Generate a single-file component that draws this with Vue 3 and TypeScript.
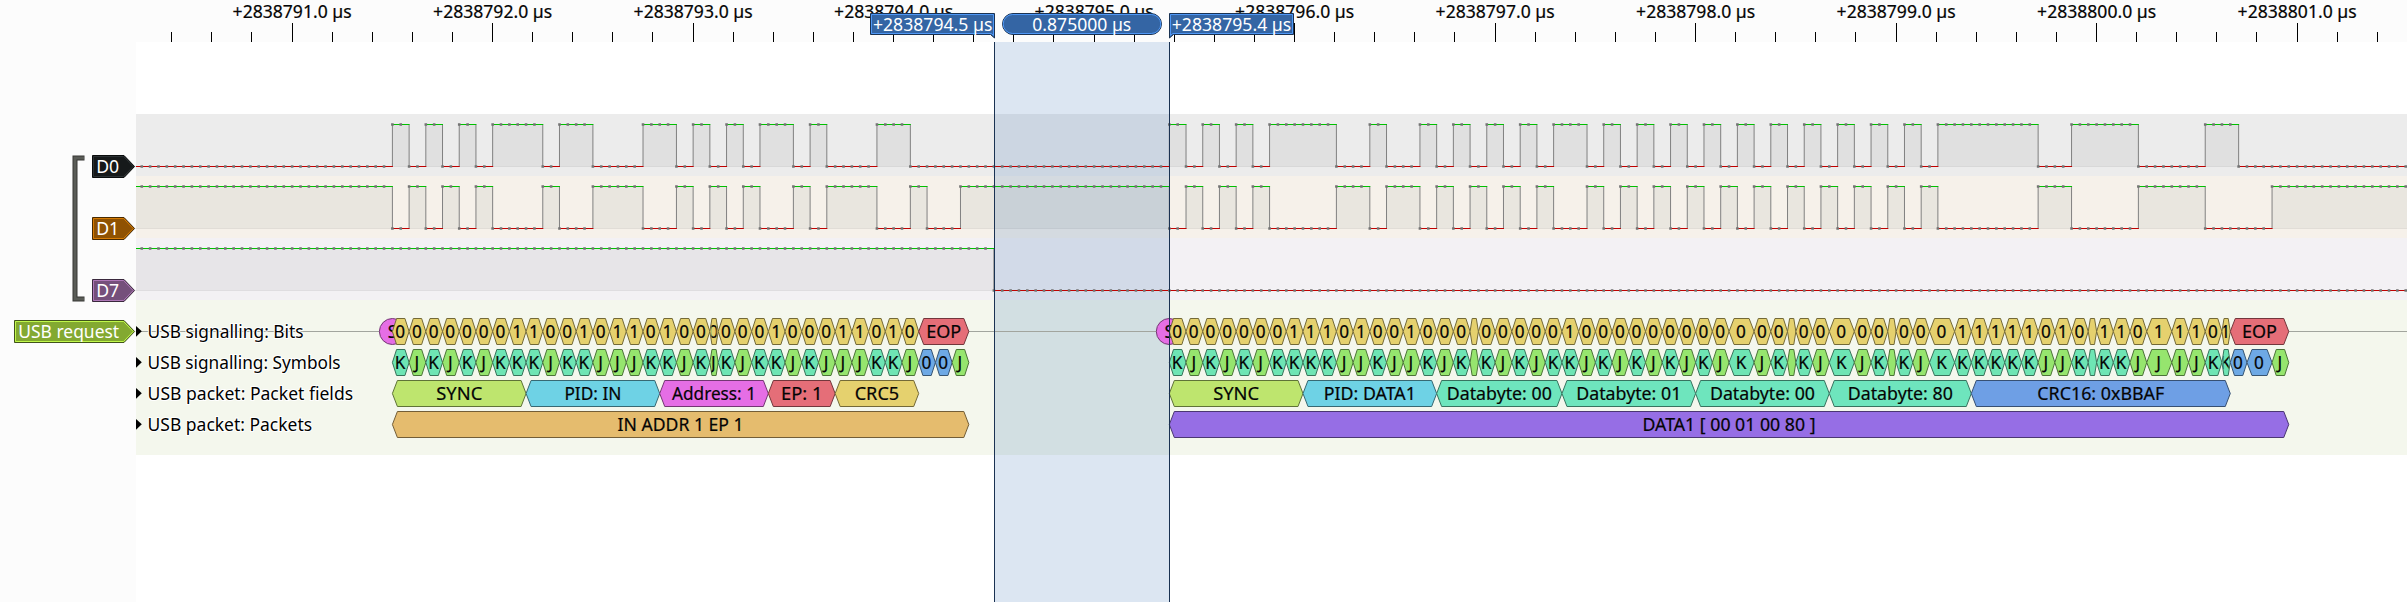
<script setup lang="ts">
type Kind = 'bit' | 'eop' | 'k' | 'j' | 'se0' | 'sync' | 'pid' | 'addr' | 'ep' | 'crc5' | 'data' | 'crc16' | 'in' | 'data1'

interface Annotation {
  from: number
  to: number
  text: string
  kind: Kind
  width?: number
}

interface Channel {
  name: string
  color: string
  shade: string
  highShade: string
  outline: string
  highlight: string
  top: number
  startHigh: boolean
  edges: number[]
}

const LEFT = 136
const RIGHT = 2407
const ORIGIN = 392.4
const STEP = 8.354

const sx = (n: number): number => ORIGIN + n * STEP

/* ---- time ruler ---- */
const ticks = Array.from({ length: 56 }, (_, i) => {
  const x = Math.floor(292.05 + (i - 3) * 40.1) + 0.5
  return { x, major: (i - 3) % 5 === 0 }
})
const majors = Array.from({ length: 11 }, (_, i) => ({
  x: 292.1 + i * 200.5,
  text: `+${2838791 + i}.0 µs`,
}))

/* ---- logic channels ---- */
const pairEdges = [
  0, 2, 4, 6, 8, 10, 12, 18, 20, 24, 30, 34, 36, 38, 40, 42, 44, 48, 50, 52, 58, 62,
]
const dataEdges = [
  93, 95, 97, 99, 101, 103, 105, 113, 117, 119, 123, 125, 127, 129, 131, 133, 135, 137, 139, 143,
  145, 147, 149, 151, 153, 155, 157, 159, 161, 163, 165, 167, 169, 171, 173, 175, 177, 179, 181,
  183, 185, 197, 201, 209, 217,
]

const channels: Channel[] = [
  {
    name: 'D0', color: '#16191a', shade: '#ececec', highShade: '#e0e0e0', outline: '#0a0c0c', highlight: '#2b3133',
    top: 114, startHigh: false, edges: [...pairEdges, ...dataEdges, 221],
  },
  {
    name: 'D1', color: '#8f5202', shade: '#f6f1ea', highShade: '#e9e6df', outline: '#472900', highlight: '#d67b03',
    top: 176, startHigh: true, edges: [...pairEdges, 64, 68, ...dataEdges, 225],
  },
  {
    name: 'D7', color: '#75507b', shade: '#f3f1f4', highShade: '#e7e5e8', outline: '#3a283d', highlight: '#af78b8',
    top: 238, startHigh: true, edges: [72],
  },
]

interface Run { x1: number; x2: number; high: boolean }

function runs(ch: Channel): Run[] {
  const xs = [LEFT, ...ch.edges.map(sx), RIGHT]
  return xs.slice(1).map((x2, i) => ({
    x1: xs[i],
    x2,
    high: i % 2 === 0 ? ch.startHigh : !ch.startHigh,
  }))
}

function levelAt(ch: Channel, n: number): boolean {
  const passed = ch.edges.filter((e) => e <= n).length
  return passed % 2 === 0 ? ch.startHigh : !ch.startHigh
}

const samples = Array.from({ length: 272 }, (_, i) => i - 30)

function dots(ch: Channel): string {
  return samples
    .map((n) => `M${(sx(n) - 1.3).toFixed(2)} ${ch.top + (levelAt(ch, n) ? 10.5 : 52.5)}h2.6`)
    .join('')
}

const traces = channels.map((ch) => {
  const r = runs(ch)
  return {
    ...ch,
    highs: r.filter((s) => s.high),
    green: r.filter((s) => s.high).map((s) => `M${s.x1} ${ch.top + 10.5}H${s.x2 + 0.5}`).join(''),
    red: r.filter((s) => !s.high).map((s) => `M${s.x1} ${ch.top + 52.5}H${s.x2 + 0.5}`).join(''),
    steps: ch.edges.map((e) => `M${sx(e).toFixed(2)} ${ch.top + 10.5}v42`).join(''),
    dots: dots(ch),
  }
})

/* ---- protocol decoder annotations ---- */
const fills: Record<Kind, string> = {
  bit: '#e5d16e', eop: '#e56e78', k: '#6ee5b4', j: '#96e56e', se0: '#6ea9e5',
  sync: '#bee56e', pid: '#6ed2e5', addr: '#e56ee5', ep: '#e56e78', crc5: '#e5d16e',
  data: '#6ee5bd', crc16: '#6e9fe5', in: '#e5bc6e', data1: '#966ee5',
}

function darker(hex: string): string {
  const part = (i: number) => Math.round(parseInt(hex.slice(i, i + 2), 16) / 2)
  return `rgb(${part(1)},${part(3)},${part(5)})`
}

const symbolKind: Record<string, Kind> = { K: 'k', J: 'j', '0': 'se0' }

/* Most cells last two samples; the decoder resynchronises at these positions. */
const narrowStarts = [38, 129, 167, 179, 203, 219]
const wideStarts = [160, 172, 184, 210, 222]

function cellWidth(at: number): number {
  return narrowStarts.includes(at) ? 1 : wideStarts.includes(at) ? 3 : 2
}

/* A dot in the text stands for a cell too narrow to be lettered. */
function sequence(start: number, text: string, symbols?: string): Annotation[] {
  let at = start
  return [...text].map((c, i) => {
    const from = at
    at += cellWidth(from)
    return { from, to: at, text: c === '.' ? '' : c, kind: symbols ? symbolKind[symbols[i]] : 'bit' }
  })
}

const tokenSymbols = 'KJKJKJKKKJKKJJJKKJKJKJKKJKJJJKKJ00J'
const dataSymbols = 'KJKJKJKKKKJJKJJKJKJKJKJKKJKJKJKJKJKJKJKJKJKJKJKKKKKKJJKKKKJJJJKK00J'
const dataLetters = 'KJKJKJKKKKJJKJJKJK.KJKJKKJKJKJKJKJKJK.KJKJK.KJKKKKKKJJK.KKJJJJKK00J'
const dataBits = '000000011101001000.000001000000000000.00000.00011111010.11011101'

const rows: { y: number; items: Annotation[] }[] = [
  {
    y: 331.5,
    items: [
      ...sequence(0, '00000001100101101000000100011010'),
      { from: 63, to: 69, text: 'EOP', kind: 'eop', width: 35 },
      ...sequence(93, dataBits),
      { from: 220, to: 227, text: 'EOP', kind: 'eop', width: 35 },
    ],
  },
  {
    y: 362.5,
    items: [
      ...sequence(0, tokenSymbols, tokenSymbols),
      ...sequence(93, dataLetters, dataSymbols),
    ],
  },
  {
    y: 393.5,
    items: [
      { from: 0, to: 16, text: 'SYNC', kind: 'sync', width: 46 },
      { from: 16, to: 32, text: 'PID: IN', kind: 'pid', width: 57 },
      { from: 32, to: 45, text: 'Address: 1', kind: 'addr', width: 84 },
      { from: 45, to: 53, text: 'EP: 1', kind: 'ep', width: 41.5 },
      { from: 53, to: 63, text: 'CRC5', kind: 'crc5', width: 44.5 },
      { from: 93, to: 109, text: 'SYNC', kind: 'sync', width: 46 },
      { from: 109, to: 125, text: 'PID: DATA1', kind: 'pid', width: 92 },
      { from: 125, to: 140, text: 'Databyte: 00', kind: 'data', width: 105 },
      { from: 140, to: 156, text: 'Databyte: 01', kind: 'data', width: 105 },
      { from: 156, to: 172, text: 'Databyte: 00', kind: 'data', width: 105 },
      { from: 172, to: 189, text: 'Databyte: 80', kind: 'data', width: 105 },
      { from: 189, to: 220, text: 'CRC16: 0xBBAF', kind: 'crc16', width: 127 },
    ],
  },
  {
    y: 424.5,
    items: [
      { from: 0, to: 69, text: 'IN ADDR 1 EP 1', kind: 'in', width: 126 },
      { from: 93, to: 227, text: 'DATA1 [ 00 01 00 80 ]', kind: 'data1', width: 173 },
    ],
  },
]

function slant(a: Annotation): number {
  return Math.min(((a.to - a.from) * STEP) / 4, 5)
}

function hexagon(a: Annotation, y: number): string {
  const x1 = sx(a.from)
  const x2 = sx(a.to)
  const s = slant(a)
  return `${x1},${y} ${x1 + s},${y - 13} ${x2 - s},${y - 13} ${x2},${y} ${x2 - s},${y + 13} ${x1 + s},${y + 13}`
}

/* Inset of the box that clips an annotation's lettering. */
function inset(a: Annotation): number {
  return slant(a) * (a.to - a.from === 1 ? 0.75 : 0.4)
}

const rowLabels = [
  { y: 331.5, text: 'USB signalling: Bits', width: 156 },
  { y: 362.5, text: 'USB signalling: Symbols', width: 193 },
  { y: 393.5, text: 'USB packet: Packet fields', width: 205.5 },
  { y: 424.5, text: 'USB packet: Packets', width: 164.5 },
]

/* ---- signal name tags in the left gutter ---- */
const tags = [
  ...channels.map((c) => ({ ...c, x: 92, y: c.top + 52.5, textWidth: 23 })),
  {
    name: 'USB request', color: '#83a931', outline: '#41541a', highlight: '#c0f84a',
    x: 14, y: 331.5, textWidth: 101,
  },
]

function tagShape(x: number, y: number, gap: number): string {
  const l = x + 0.5 + gap
  const t = y - 11 + gap
  const b = y + 11 - gap
  const r = 124 - gap * 0.4
  return `${l},${t} ${r},${t} ${134.6 - gap * 1.4},${y} ${r},${b} ${l},${b}`
}
</script>

<template>
  <div class="viewer">
    <svg class="ruler" viewBox="0 0 2407 42" width="2407" height="42">
      <g class="tick">
        <line v-for="t in ticks" :key="t.x" :x1="t.x" :x2="t.x" :y1="t.major ? 23 : 32" y2="42" />
      </g>
      <g class="label">
        <text v-for="m in majors" :key="m.text" :x="m.x" y="17.8" text-anchor="middle" textLength="119" lengthAdjust="spacingAndGlyphs">{{ m.text }}</text>
      </g>
      <g class="flag">
        <path class="outer" d="M870.5 13.5H994.5V38L990.5 34.5H870.5Z" />
        <path class="inner" d="M871.5 14.5H993.5V35.5L991.5 33.5H871.5Z" />
        <rect class="outer" x="1002.5" y="13.5" width="159" height="21" rx="10.5" />
        <rect class="inner" x="1003.2" y="14.5" width="157.6" height="19" rx="9.5" />
        <path class="outer" d="M1293.5 13.5H1169.5V38L1173.5 34.5H1293.5Z" />
        <path class="inner" d="M1292.5 14.5H1170.5V35.5L1172.5 33.5H1292.5Z" />
        <text x="932.7" y="31" text-anchor="middle" textLength="119.5" lengthAdjust="spacingAndGlyphs">+2838794.5 µs</text>
        <text x="1081.8" y="31" text-anchor="middle" textLength="99" lengthAdjust="spacingAndGlyphs">0.875000 µs</text>
        <text x="1231.5" y="31" text-anchor="middle" textLength="119.5" lengthAdjust="spacingAndGlyphs">+2838795.4 µs</text>
      </g>
    </svg>

    <div class="body">
      <svg class="gutter" viewBox="0 42 136 560" width="136" height="560">
        <path class="bracket-edge" d="M84.5 158H75V299H84.5" />
        <path class="bracket" d="M84 158H75V299H84" />
        <g v-for="t in tags" :key="t.name">
          <polygon :points="tagShape(t.x, t.y, 0)" :fill="t.color" :stroke="t.outline" />
          <polygon :points="tagShape(t.x, t.y, 1)" fill="none" :stroke="t.highlight" />
          <text class="tag-text" :x="119.2" :y="t.y + 6" text-anchor="end" :textLength="t.textWidth" lengthAdjust="spacingAndGlyphs">{{ t.name }}</text>
        </g>
      </svg>

      <svg class="canvas" viewBox="136 42 2271 560" width="2271" height="560">
        <g v-for="t in traces" :key="t.name">
          <rect x="136" :y="t.top" width="2271" height="62" :fill="t.shade" />
          <rect v-for="h in t.highs" :key="h.x1" :x="h.x1" :y="t.top + 10.5" :width="h.x2 - h.x1" height="42" :fill="t.highShade" />
          <path class="base" :d="`M136 ${t.top + 52.5}H2407`" />
        </g>
        <rect class="decode" x="136" y="300" width="2271" height="155" />
        <rect class="range" x="994.5" y="42" width="175" height="560" />

        <g v-for="t in traces" :key="t.name + '-wave'">
          <path class="edge" :d="t.steps" />
          <path class="hi" :d="t.green" />
          <path class="lo" :d="t.red" />
          <path class="dots" :d="t.dots" />
        </g>

        <path class="idle" d="M136 331.5H2407" />
        <g v-for="x in [sx(0), sx(93)]" :key="x">
          <rect :x="x - 13" y="318.5" width="26" height="26" rx="13" class="start" />
          <text :x="x" y="337.5" text-anchor="middle" class="ann">S</text>
        </g>
        <g v-for="row in rows" :key="row.y">
          <g v-for="a in row.items" :key="a.from">
            <polygon :points="hexagon(a, row.y)" :fill="fills[a.kind]" :stroke="darker(fills[a.kind])" />
            <svg
              v-if="a.text"
              :x="sx(a.from) + inset(a)"
              :y="row.y - 13"
              :width="(a.to - a.from) * STEP - 2 * inset(a)"
              height="26"
            >
              <text v-if="a.width" class="ann" x="50%" y="19.2" text-anchor="middle" :textLength="a.width" lengthAdjust="spacingAndGlyphs">{{ a.text }}</text>
              <text v-else class="ann" x="50%" dx="-0.6" y="19.2" text-anchor="middle">{{ a.text }}</text>
            </svg>
          </g>
        </g>

        <g v-for="l in rowLabels" :key="l.text">
          <path :d="`M136 ${l.y - 5.5}L141.8 ${l.y - 0.3}L136 ${l.y + 5.2}Z`" />
          <text class="halo" x="147.6" :y="l.y + 6" :textLength="l.width" lengthAdjust="spacingAndGlyphs">{{ l.text }}</text>
        </g>

        <path class="cursor" d="M994.5 42V602M1169.5 42V602" />
      </svg>
    </div>
  </div>
</template>

<style scoped>
.viewer {
  display: flex;
  flex-direction: column;
  width: 2407px;
  height: 602px;
  background: #fff;
  overflow: hidden;
}

.body {
  display: flex;
}

svg {
  display: block;
  flex: none;
}

text {
  font-family: "Noto Sans", "Open Sans", sans-serif;
  font-size: 17.2px;
}

.ruler,
.gutter {
  background: #fcfcfc;
}

.tick line {
  stroke: #000;
}

.halo {
  fill: #000;
  paint-order: stroke;
  stroke: #fff;
  stroke-width: 2px;
}

.label text,
.ann {
  fill: #050505;
  stroke: #050505;
  stroke-width: 0.2px;
}

.flag .outer {
  fill: #3465a4;
  stroke: #1a3252;
}

.flag .inner {
  fill: none;
  stroke: #4e97f6;
}

.flag text,
.tag-text {
  fill: #fff;
}

.bracket-edge {
  fill: none;
  stroke: #363735;
  stroke-width: 5px;
}

.bracket {
  fill: none;
  stroke: #5a5c57;
  stroke-width: 3px;
}

.base {
  stroke: rgba(0, 0, 0, 0.06);
}

.decode {
  fill: #f4f7ed;
}

.range {
  fill: rgba(30, 95, 175, 0.155);
}

.edge {
  stroke: #808080;
}

.hi {
  stroke: #00c000;
}

.lo {
  stroke: #c00000;
}

.dots {
  stroke: #737373;
  stroke-width: 2.5px;
}

.idle {
  stroke: #a2a59e;
}

.start {
  fill: #e56ee5;
  stroke: #733773;
}

.cursor {
  stroke: #1a3252;
}
</style>

<style>
body {
  background: #fff;
}
</style>
